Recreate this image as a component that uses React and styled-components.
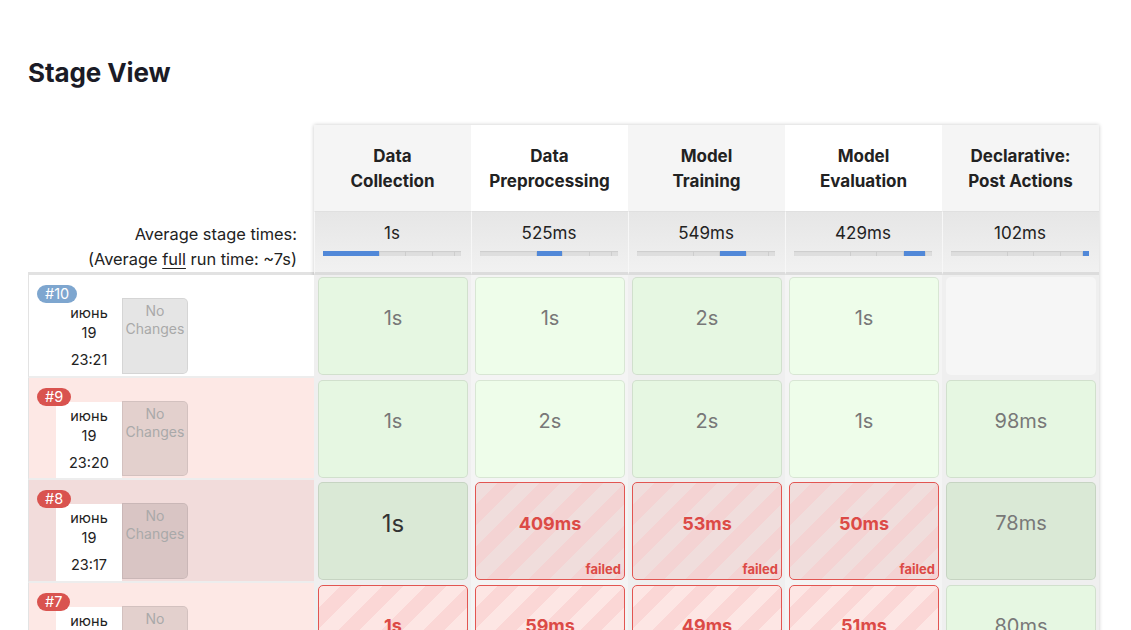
import React from 'react';
import styled, { createGlobalStyle, css } from 'styled-components';

const GlobalStyle = createGlobalStyle`
  html, body {
    margin: 0;
    padding: 0;
    background: #fff;
  }
  body {
    font-family: Inter, "Noto Sans", sans-serif;
    color: #222;
  }
`;

const Page = styled.div`
  box-sizing: border-box;
  width: 1131px;
  height: 630px;
  overflow: hidden;
  padding: 56px 0 0 28px;
`;

const Title = styled.h2`
  margin: 0 0 35px;
  font-size: 26px;
  line-height: 34px;
  font-weight: 700;
  color: #1b1b26;
  letter-spacing: -0.1px;
`;

const Table = styled.div`
  display: flex;
  align-items: flex-start;
`;

const LeftCol = styled.div`
  flex: none;
  width: 286px;
`;

const HeadSpacer = styled.div`
  height: 86px;
`;

const AvgLabel = styled.div`
  box-sizing: border-box;
  height: 64px;
  padding: 11px 17px 0 0;
  text-align: right;
  font-size: 16.4px;
  line-height: 25px;
  color: #222;
  border-bottom: 3px solid #e2e2e2;

  u {
    text-decoration-thickness: 1px;
    text-underline-offset: 3px;
  }
`;

const BuildCell = styled.div`
  position: relative;
  box-sizing: border-box;
  height: 102.5px;
  border-left: 1px solid #e3e3e3;
  border-bottom: 2.5px solid #ededed;
  padding: 24px 0 0 27px;
  display: flex;
  align-items: stretch;
  background: ${(p) => (p.$tone === 'ok' ? '#fff' : p.$hover ? '#f2dcdb' : '#fde8e5')};
`;

const Badge = styled.span`
  position: absolute;
  top: 10px;
  left: 8px;
  height: 18px;
  padding: 0 8px;
  border-radius: 9px;
  font-size: 14.5px;
  line-height: 18px;
  color: #fff;
  background: ${(p) => (p.$tone === 'ok' ? '#7ea6cf' : '#d9534f')};
  z-index: 1;
`;

const DateBox = styled.div`
  width: 66px;
  background: #fff;
  display: flex;
  flex-direction: column;
  align-items: center;
  padding-top: 4px;
  font-size: 14.5px;
  line-height: 20px;
  color: #222;

  span:last-child {
    margin-top: 7px;
  }
`;

const NoChanges = styled.div`
  box-sizing: border-box;
  width: 66px;
  margin: -1px 0 2px;
  border: 1px solid rgba(0, 0, 0, 0.07);
  border-radius: 0 5px 5px 0;
  background: rgba(0, 0, 0, 0.1);
  text-align: center;
  font-size: 14px;
  line-height: 18px;
  padding-top: 3px;
  color: #a9a9a9;
`;

const Stages = styled.div`
  display: grid;
  grid-template-columns: repeat(5, 157px);
  box-shadow: 0 0 4px rgba(0, 0, 0, 0.22);
`;

const StageHead = styled.div`
  height: 86px;
  padding-top: 1px;
  box-sizing: border-box;
  display: flex;
  align-items: center;
  justify-content: center;
  text-align: center;
  font-size: 17px;
  line-height: 25px;
  font-weight: 700;
  color: #222;
  background: ${(p) => (p.$alt ? '#fff' : '#f5f5f5')};
`;

const AvgCell = styled.div`
  box-sizing: border-box;
  height: 64px;
  padding: 11px 0 0 8px;
  border-top: 1px solid #e0e0e0;
  border-left: 1px solid #f7f7f7;
  border-bottom: 3px solid #dcdcdc;
  background: linear-gradient(#e6e6e6, #f1f1f1);
`;

const AvgValue = styled.div`
  width: 138px;
  text-align: center;
  font-size: 17px;
  line-height: 20px;
  color: #222;
`;

const Bar = styled.div`
  display: flex;
  width: 138px;
  height: 5px;
  margin-top: 8px;
  background: #dedede;
  box-shadow: inset 0 1px 1px rgba(0, 0, 0, 0.08);
`;

const Seg = styled.div`
  height: 100%;
  box-sizing: border-box;
  border-right: 1px solid #cdcdcd;
  background: ${(p) => (p.$on ? '#5188d8' : 'transparent')};
  &:last-child {
    border-right: 0;
  }
`;

const Slot = styled.div`
  box-sizing: border-box;
  height: 102.5px;
  padding: 2px 3px 2.5px 4px;
  background: ${(p) => (p.$alt ? '#f4f4f4' : '#efefef')};
`;

const okBg = (p) => {
  if (p.$hover) return '#dae9d6';
  return p.$alt ? '#eefdea' : '#e6f7e2';
};

const Box = styled.div`
  position: relative;
  box-sizing: border-box;
  height: 98px;
  border-radius: 5px;
  display: flex;
  align-items: center;
  justify-content: center;
  padding-bottom: 16px;

  ${(p) =>
    p.$status === 'ok' &&
    css`
      background: ${okBg(p)};
      border: 1px solid rgba(0, 0, 0, 0.09);
      color: ${p.$big ? '#333' : '#787878'};
      font-size: ${p.$big ? '24px' : '20px'};
    `}

  ${(p) =>
    p.$status === 'empty' &&
    css`
      background: #f6f6f6;
    `}

  ${(p) =>
    p.$status === 'fail' &&
    css`
      border: 1.5px solid #e25551;
      color: #dc4a46;
      font-size: 18px;
      font-weight: 700;
      background: repeating-linear-gradient(
        135deg,
        ${p.$hover ? '#f0dddc' : '#fde6e4'} 0 15px,
        ${p.$hover ? '#f4d3d3' : '#fbd7d6'} 15px 30px
      );
    `}
`;

const FailedTag = styled.span`
  position: absolute;
  right: 3px;
  bottom: 2px;
  font-size: 13px;
  line-height: 16px;
  font-weight: 700;
  color: #dc4a46;
`;

const stages = [
  ['Data', 'Collection'],
  ['Data', 'Preprocessing'],
  ['Model', 'Training'],
  ['Model', 'Evaluation'],
  ['Declarative:', 'Post Actions'],
];

const averages = ['1s', '525ms', '549ms', '429ms', '102ms'];
const segWidths = [57, 26, 27, 22, 6];

const ok = (t, big) => ({ s: 'ok', t, big });
const fail = (t) => ({ s: 'fail', t });

const builds = [
  { id: 10, tone: 'ok', time: '23:21', cells: [ok('1s'), ok('1s'), ok('2s'), ok('1s'), { s: 'empty' }] },
  { id: 9, tone: 'fail', time: '23:20', cells: [ok('1s'), ok('2s'), ok('2s'), ok('1s'), ok('98ms')] },
  {
    id: 8,
    tone: 'fail',
    hover: true,
    time: '23:17',
    cells: [ok('1s', true), fail('409ms'), fail('53ms'), fail('50ms'), ok('78ms')],
  },
  { id: 7, tone: 'fail', time: '23:15', cells: [fail('1s'), fail('59ms'), fail('49ms'), fail('51ms'), ok('80ms')] },
];

export default function App() {
  return (
    <Page>
      <GlobalStyle />
      <Title>Stage View</Title>
      <Table>
        <LeftCol>
          <HeadSpacer />
          <AvgLabel>
            Average stage times:
            <br />
            (Average <u>full</u> run time: ~7s)
          </AvgLabel>
          {builds.map((b) => (
            <BuildCell key={b.id} $tone={b.tone} $hover={b.hover}>
              <Badge $tone={b.tone}>#{b.id}</Badge>
              <DateBox>
                <span>июнь</span>
                <span>19</span>
                <span>{b.time}</span>
              </DateBox>
              <NoChanges>
                No
                <br />
                Changes
              </NoChanges>
            </BuildCell>
          ))}
        </LeftCol>
        <Stages>
          {stages.map((s, i) => (
            <StageHead key={s[1]} $alt={i % 2 === 1}>
              {s[0]}
              <br />
              {s[1]}
            </StageHead>
          ))}
          {averages.map((a, i) => (
            <AvgCell key={i}>
              <AvgValue>{a}</AvgValue>
              <Bar>
                {segWidths.map((w, j) => (
                  <Seg key={j} $on={j === i} style={{ width: w }} />
                ))}
              </Bar>
            </AvgCell>
          ))}
          {builds.map((b) =>
            b.cells.map((c, i) => (
              <Slot key={`${b.id}-${i}`} $alt={i % 2 === 1}>
                <Box $status={c.s} $alt={i % 2 === 1} $hover={b.hover} $big={c.big}>
                  {c.t}
                  {c.s === 'fail' && <FailedTag>failed</FailedTag>}
                </Box>
              </Slot>
            ))
          )}
        </Stages>
      </Table>
    </Page>
  );
}
